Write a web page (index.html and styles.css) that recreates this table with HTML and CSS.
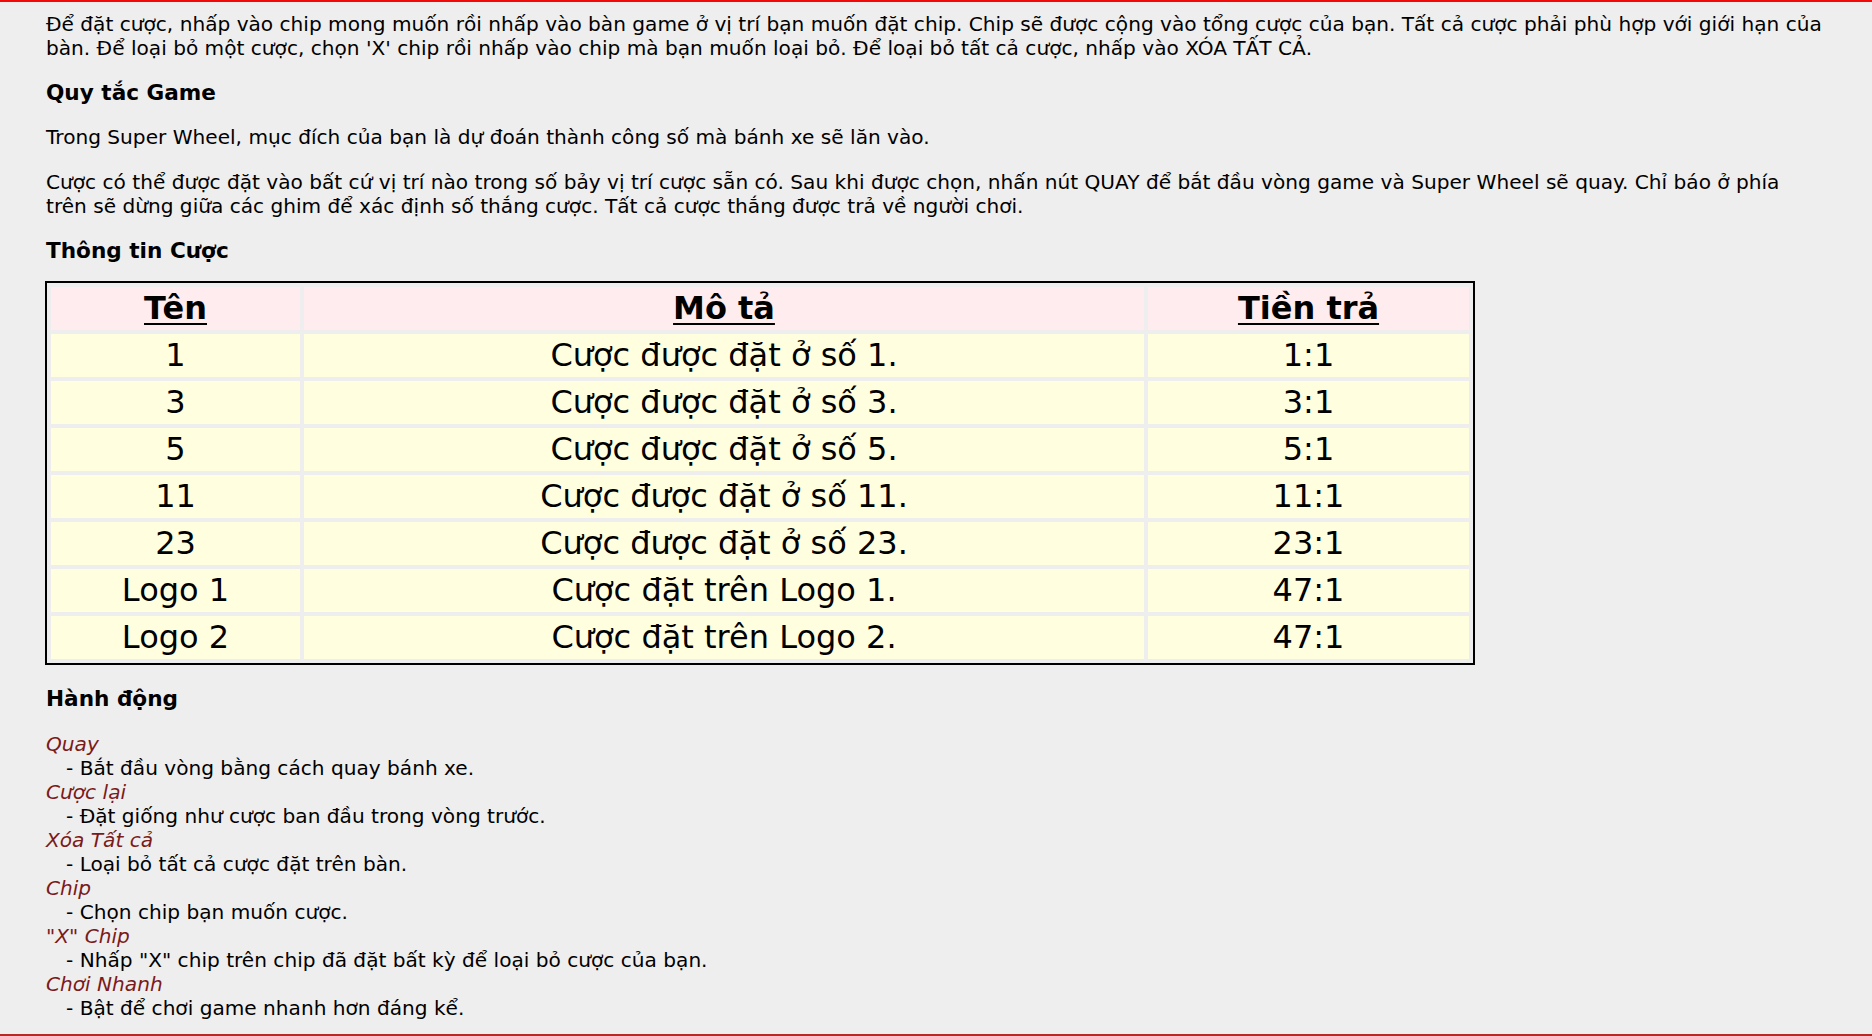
FILE: index.html
```html
<!DOCTYPE html>
<html lang="vi">
<head>
<meta charset="utf-8">
<title>Super Wheel - Trợ giúp</title>
<link rel="stylesheet" href="styles.css">
</head>
<body>
<div class="page">
  <div class="content">
    <p class="para">Để đặt cược, nhấp vào chip mong muốn rồi nhấp vào bàn game ở vị trí bạn muốn đặt chip. Chip sẽ được cộng vào tổng cược của bạn. Tất cả cược phải phù hợp với giới hạn của bàn. Để loại bỏ một cược, chọn 'X' chip rồi nhấp vào chip mà bạn muốn loại bỏ. Để loại bỏ tất cả cược, nhấp vào XÓA TẤT CẢ.</p>

    <h2 class="heading">Quy tắc Game</h2>
    <p class="para">Trong Super Wheel, mục đích của bạn là dự đoán thành công số mà bánh xe sẽ lăn vào.</p>
    <p class="para">Cược có thể được đặt vào bất cứ vị trí nào trong số bảy vị trí cược sẵn có. Sau khi được chọn, nhấn nút QUAY để bắt đầu vòng game và Super Wheel sẽ quay. Chỉ báo ở phía trên sẽ dừng giữa các ghim để xác định số thắng cược. Tất cả cược thắng được trả về người chơi.</p>

    <h2 class="heading heading-table">Thông tin Cược</h2>
    <table class="bets">
      <colgroup>
        <col class="c-name">
        <col class="c-desc">
        <col class="c-pay">
      </colgroup>
      <thead>
        <tr><th>Tên</th><th>Mô tả</th><th>Tiền trả</th></tr>
      </thead>
      <tbody>
        <tr><td>1</td><td>Cược được đặt ở số 1.</td><td>1:1</td></tr>
        <tr><td>3</td><td>Cược được đặt ở số 3.</td><td>3:1</td></tr>
        <tr><td>5</td><td>Cược được đặt ở số 5.</td><td>5:1</td></tr>
        <tr><td>11</td><td>Cược được đặt ở số 11.</td><td>11:1</td></tr>
        <tr><td>23</td><td>Cược được đặt ở số 23.</td><td>23:1</td></tr>
        <tr><td>Logo 1</td><td>Cược đặt trên Logo 1.</td><td>47:1</td></tr>
        <tr><td>Logo 2</td><td>Cược đặt trên Logo 2.</td><td>47:1</td></tr>
      </tbody>
    </table>

    <h2 class="heading">Hành động</h2>
    <dl class="actions">
      <dt>Quay</dt>
      <dd>- Bắt đầu vòng bằng cách quay bánh xe.</dd>
      <dt>Cược lại</dt>
      <dd>- Đặt giống như cược ban đầu trong vòng trước.</dd>
      <dt>Xóa Tất cả</dt>
      <dd>- Loại bỏ tất cả cược đặt trên bàn.</dd>
      <dt>Chip</dt>
      <dd>- Chọn chip bạn muốn cược.</dd>
      <dt>"X" Chip</dt>
      <dd>- Nhấp "X" chip trên chip đã đặt bất kỳ để loại bỏ cược của bạn.</dd>
      <dt>Chơi Nhanh</dt>
      <dd>- Bật để chơi game nhanh hơn đáng kể.</dd>
    </dl>
  </div>
</div>
</body>
</html>
```

FILE: styles.css
```css
html, body {
  margin: 0;
  padding: 0;
  background: #eeeeee;
}

body {
  font-family: "DejaVu Sans", "Liberation Sans", sans-serif;
  font-size: 20.12px;
  line-height: 24px;
  color: #000;
}

.page {
  height: 1036px;
  box-sizing: border-box;
  border-top: 2px solid #f00a0a;
  border-bottom: 2px solid #b22a2a;
  overflow: hidden;
}

.content {
  padding: 10px 47px 0 46px;
}

.para {
  margin: 0 0 21px 0;
}

.heading {
  font-size: 21.6px;
  font-weight: bold;
  line-height: 24px;
  margin: 0 0 20px 0;
}

.heading-table {
  margin-bottom: 18px;
}

.bets {
  width: 1430px;
  border: 2px solid #000;
  border-collapse: separate;
  border-spacing: 4px;
  font-size: 32px;
  margin: 0 0 22px -1px;
  table-layout: fixed;
}

.c-name { width: 249px; }
.c-desc { width: 840px; }
.c-pay { width: auto; }

.bets th,
.bets td {
  height: 43px;
  padding: 0;
  text-align: center;
  vertical-align: middle;
  line-height: 43px;
}

.bets th {
  background: #ffecee;
  font-weight: bold;
  text-decoration: underline;
  text-decoration-thickness: 2px;
  text-underline-offset: 4px;
}

.bets td {
  background: #ffffe0;
}

.actions {
  margin: 0;
  padding-top: 1px;
}

.actions dt {
  font-style: italic;
  color: #7a1a1a;
}

.actions dd {
  margin: 0;
  padding-left: 20px;
}
```
